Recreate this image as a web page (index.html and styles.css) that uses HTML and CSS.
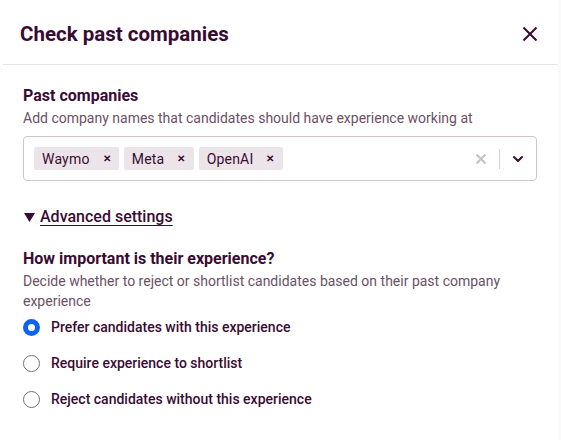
FILE: index.html
```html
<!DOCTYPE html>
<html lang="en">
<head>
    <meta charset="UTF-8">
    <meta name="viewport" content="width=device-width, initial-scale=1.0">
    <title>Check past companies</title>
    <link rel="stylesheet" href="styles.css">
</head>
<body>
    <div class="modal">
        <div class="modal-header">
            <h2 class="modal-title">Check past companies</h2>
            <button class="close-button" aria-label="Close">
                <svg width="16" height="16" viewBox="0 0 16 16">
                    <path d="M1.5 1.5 L14.5 14.5 M14.5 1.5 L1.5 14.5" stroke="currentColor" stroke-width="2" fill="none"/>
                </svg>
            </button>
        </div>

        <div class="modal-body">
            <div class="field">
                <label class="field-label">Past companies</label>
                <p class="field-help">Add company names that candidates should have experience working at</p>

                <div class="multi-select">
                    <div class="chip-list">
                        <span class="chip">Waymo <span class="chip-remove">&#x2715;</span></span>
                        <span class="chip">Meta <span class="chip-remove">&#x2715;</span></span>
                        <span class="chip">OpenAI <span class="chip-remove">&#x2715;</span></span>
                    </div>
                    <div class="select-controls">
                        <svg class="clear-icon" width="12" height="12" viewBox="0 0 12 12">
                            <path d="M1.5 1.5 L10.5 10.5 M10.5 1.5 L1.5 10.5" stroke="currentColor" stroke-width="2" fill="none"/>
                        </svg>
                        <span class="select-separator"></span>
                        <svg class="chevron-icon" width="12" height="12" viewBox="0 0 12 12">
                            <path d="M2 4 L6 8 L10 4" stroke="currentColor" stroke-width="2" fill="none" stroke-linecap="round" stroke-linejoin="round"/>
                        </svg>
                    </div>
                </div>
            </div>

            <div class="advanced-toggle">
                <svg class="toggle-arrow" width="11" height="9" viewBox="0 0 11 9">
                    <path d="M0 0 L11 0 L5.5 9 Z" fill="currentColor"/>
                </svg>
                <a href="#" class="toggle-link">Advanced settings</a>
            </div>

            <div class="field">
                <label class="field-label">How important is their experience?</label>
                <p class="field-help">Decide whether to reject or shortlist candidates based on their past company experience</p>

                <div class="radio-group">
                    <label class="radio-option">
                        <span class="radio checked"></span>
                        Prefer candidates with this experience
                    </label>
                    <label class="radio-option">
                        <span class="radio"></span>
                        Require experience to shortlist
                    </label>
                    <label class="radio-option">
                        <span class="radio"></span>
                        Reject candidates without this experience
                    </label>
                </div>
            </div>
        </div>
    </div>
</body>
</html>
```

FILE: styles.css
```css
* {
    box-sizing: border-box;
}

html, body {
    margin: 0;
    padding: 0;
    height: 100%;
    background-color: #fafafa;
    font-family: 'Roboto', sans-serif;
    color: #3a0b32;
    overflow: hidden;
}

.modal {
    width: 558px;
    height: 100%;
    background-color: #fff;
}

/* Header */
.modal-header {
    display: flex;
    align-items: center;
    justify-content: space-between;
    height: 65px;
    margin-left: 3px;
    padding: 4px 20px 0 17px;
    border-bottom: 1px solid #e6e3e5;
}

.modal-title {
    margin: 0;
    font-size: 20.5px;
    font-weight: 700;
    color: #3a0b32;
}

.close-button {
    background: none;
    border: none;
    padding: 0;
    width: 16px;
    height: 16px;
    color: #3a0b32;
    cursor: pointer;
    display: flex;
}

/* Body */
.modal-body {
    padding: 19px 21px 0 23px;
}

.field-label {
    display: block;
    font-size: 16px;
    font-weight: 700;
    line-height: 24px;
}

.field-help {
    margin: 0;
    font-size: 14px;
    line-height: 20px;
    color: #6b5066;
}

.multi-select {
    display: flex;
    align-items: center;
    justify-content: space-between;
    margin-top: 8px;
    height: 45px;
    border: 1px solid #cfc6cd;
    border-radius: 4px;
    padding: 0 12px 0 10px;
}

.chip-list {
    display: flex;
    gap: 5px;
}

.chip {
    display: flex;
    align-items: center;
    height: 23px;
    padding: 0 8px;
    background-color: #ebe5ea;
    border-radius: 2px;
    font-size: 14px;
    letter-spacing: 0.2px;
    color: #3a0b32;
}

.chip-remove {
    margin-left: 13px;
    font-size: 10px;
    font-weight: 700;
}

.select-controls {
    display: flex;
    align-items: center;
    gap: 12px;
}

.clear-icon {
    color: #c9bfc7;
}

.select-separator {
    width: 1px;
    height: 20px;
    background-color: #d8d0d6;
}

.chevron-icon {
    color: #3a0b32;
}

/* Advanced settings toggle */
.advanced-toggle {
    display: flex;
    align-items: center;
    gap: 5px;
    margin-top: 24px;
    margin-bottom: 18px;
    font-size: 16px;
    font-weight: 500;
    line-height: 24px;
}

.toggle-arrow {
    margin-left: 1px;
    color: #3a0b32;
}

.toggle-link {
    color: #3a0b32;
    text-decoration: underline;
    text-underline-offset: 3px;
}

/* Radios */
.radio-group {
    display: flex;
    flex-direction: column;
    gap: 16px;
    margin-top: 6px;
}

.radio-option {
    display: flex;
    align-items: center;
    gap: 11px;
    height: 20px;
    font-size: 14px;
    font-weight: 500;
    color: #3a0b32;
}

.radio {
    width: 17px;
    height: 17px;
    border-radius: 50%;
    border: 1.5px solid #6b6f80;
    background: #fff;
    flex-shrink: 0;
}

.radio.checked {
    border: 5px solid #0e63f4;
}
```
